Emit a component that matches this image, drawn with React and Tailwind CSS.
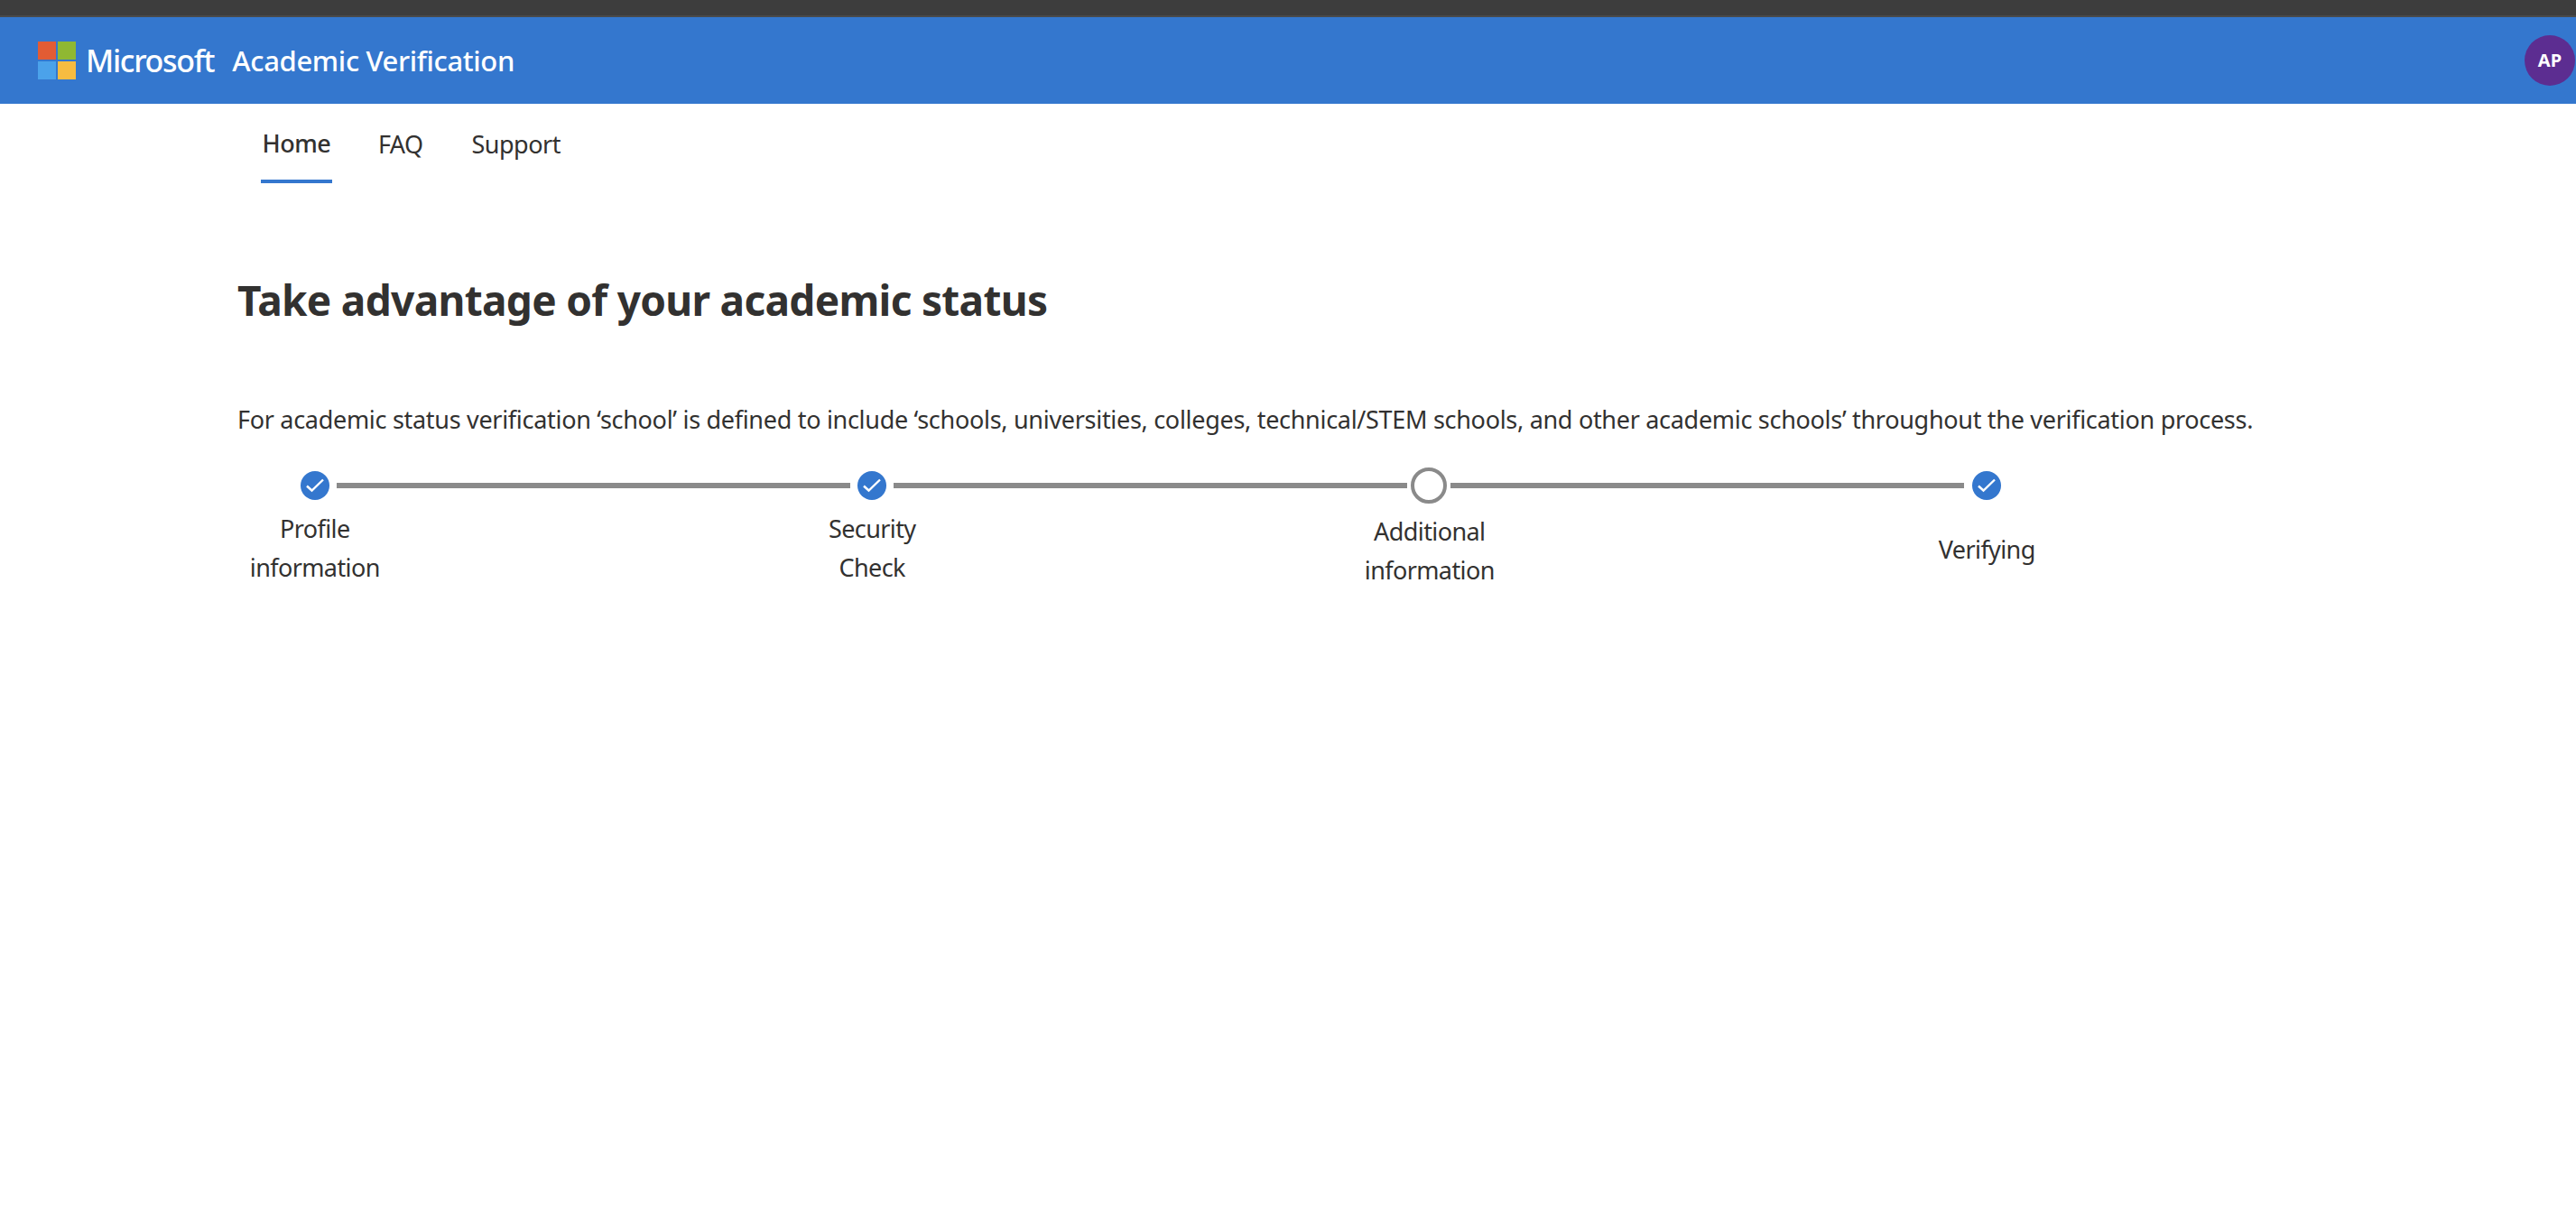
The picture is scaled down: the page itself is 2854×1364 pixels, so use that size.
const font = { fontFamily: '"Noto Sans", "Open Sans", sans-serif' };

const steps = [
  { label: ["Profile", "information"], extra: "" },
  { label: ["Security", "Check"], extra: "" },
  { label: ["Additional", "information"], extra: "mt-[3px]" },
  { label: ["Verifying"], extra: "mt-[23px]" },
];

const Done = () => (
  <div className="h-8 w-8 shrink-0 rounded-full bg-[#3477ce]">
    <svg width="32" height="32" viewBox="0 0 32 32" fill="none">
      <path d="M7 16.5 L12.5 21.5 L25 9.5" stroke="#fff" strokeWidth="2.4" />
    </svg>
  </div>
);

const Line = () => <div className="h-[6px] w-[569px] shrink-0 bg-[#8a8a8a]" />;

export default function App() {
  return (
    <div className="min-h-[1364px] bg-white text-[#323130]" style={font}>
      <div className="h-[19px] border-b-2 border-[#4a4a4a] bg-[#3d3d3d]" />

      <header className="flex h-[96px] items-center justify-between bg-[#3477ce] pl-[42px] pr-px text-white">
        <div className="flex items-center">
          <div className="grid w-[42px] grid-cols-2 gap-[1.5px]">
            <div className="h-[20px] bg-[#e25c34]" />
            <div className="h-[20px] bg-[#8fb832]" />
            <div className="h-[20px] bg-[#4ba2ea]" />
            <div className="h-[20px] bg-[#f7bc41]" />
          </div>
          <span className="ml-[11px] text-[34px] font-medium tracking-[-1.3px]">Microsoft</span>
          <span className="ml-[20px] text-[31px] font-medium tracking-[-0.35px]">Academic Verification</span>
        </div>
        <div className="flex h-14 w-14 items-center justify-center rounded-full bg-[#5c2d91] text-[20px] font-bold">
          AP
        </div>
      </header>

      <nav className="flex h-[88px] items-stretch pl-[289px] text-[27px]">
        <a className="flex w-[79px] items-center justify-center border-b-4 border-[#3477ce] pt-[4px] font-medium tracking-[-0.5px]">Home</a>
        <a className="ml-[51px] flex items-center pt-[2px] tracking-[-0.6px]">FAQ</a>
        <a className="ml-[54px] flex items-center pt-[2px] tracking-[-0.5px]">Support</a>
      </nav>

      <main className="pl-[263px]">
        <h1 className="mt-[97px] text-[46px] leading-[64px] font-bold tracking-[-0.7px]">
          Take advantage of your academic status
        </h1>
        <p className="mt-[82px] whitespace-nowrap text-[27px] leading-[38px] tracking-[-0.3px]">
          For academic status verification ‘school’ is defined to include ‘schools, universities, colleges, technical/STEM schools, and other academic schools’ throughout the verification process.
        </p>

        {/* stepper */}
        <div className="mt-[34px] flex h-10 items-center pl-[70px]">
          <Done />
          <div className="ml-2"><Line /></div>
          <div className="ml-2"><Done /></div>
          <div className="ml-2"><Line /></div>
          <div className="ml-1 h-10 w-10 shrink-0 rounded-full border-4 border-[#8a8a8a]" />
          <div className="ml-1"><Line /></div>
          <div className="ml-[9px]"><Done /></div>
        </div>
        <div className="ml-[-223px] mt-[6px] grid w-[2470px] grid-cols-4 text-center text-[27px] leading-[43px] tracking-[-0.6px]">
          {steps.map((s) => (
            <div key={s.label[0]} className={s.extra}>
              {s.label.map((l) => (
                <div key={l}>{l}</div>
              ))}
            </div>
          ))}
        </div>
      </main>
    </div>
  );
}
